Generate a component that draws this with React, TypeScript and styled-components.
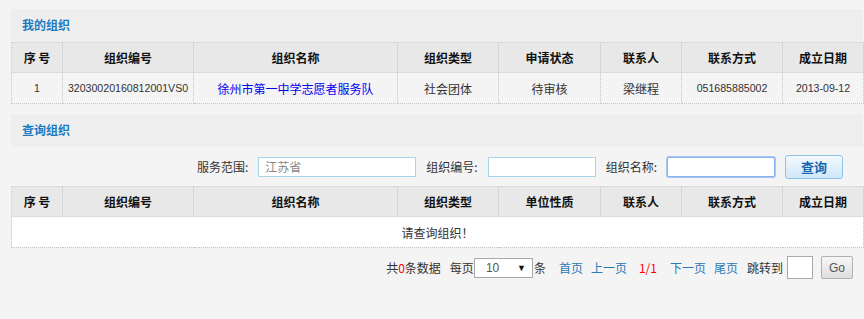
import * as React from "react";
import styled, { createGlobalStyle } from "styled-components";

const GlobalStyle = createGlobalStyle`
  html, body {
    margin: 0;
    padding: 0;
    background: #f4f4f4;
  }
  body {
    font-family: "Noto Sans CJK SC", "Liberation Sans", sans-serif;
    font-size: 12px;
    color: #333;
  }
`;

const Page = styled.div`
  padding: 9px 1px 0 11px;
  width: 864px;
  box-sizing: border-box;
`;

const Section = styled.section`
  margin-bottom: 10px;
`;

const SectionTitle = styled.h2`
  margin: 0;
  height: 33px;
  line-height: 32px;
  padding-left: 11px;
  background: #eeeeee;
  color: #1a7bc3;
  font-size: 12px;
  font-weight: bold;
`;

const Table = styled.table`
  width: 100%;
  border-collapse: collapse;
  table-layout: fixed;
`;

const Th = styled.th`
  height: 29px;
  padding: 0;
  background: #e8e8e8;
  border-top: 1px solid #dcdcdc;
  border-bottom: 1px solid #dcdcdc;
  border-left: 1px dotted #c4c4c4;
  border-right: 1px dotted #c4c4c4;
  font-weight: bold;
  font-size: 12px;
  color: #111;
  text-align: center;
`;

const Td = styled.td<{ $white?: boolean; $mono?: boolean }>`
  height: 30px;
  padding: 0;
  background: ${(p) => (p.$white ? "#ffffff" : "#f4f4f4")};
  border: 1px dotted #c4c4c4;
  text-align: center;
  font-size: ${(p) => (p.$mono ? "10.6px" : "12px")};
  font-family: ${(p) =>
    p.$mono ? '"Liberation Sans", sans-serif' : '"Noto Sans CJK SC", sans-serif'};
  color: #333;
  white-space: nowrap;
  overflow: hidden;
`;

const NameLink = styled.a`
  color: #0000ee;
  text-decoration: none;
`;

const SearchBar = styled.div`
  display: flex;
  align-items: center;
  justify-content: flex-end;
  height: 39px;
  padding-right: 20px;
`;

const Field = styled.label`
  display: flex;
  align-items: center;
  gap: 10px;
  margin-right: 10px;
  color: #333;
`;

const TextInput = styled.input<{ $w: number; $focus?: boolean }>`
  width: ${(p) => p.$w}px;
  height: 20px;
  box-sizing: border-box;
  padding: 0 6px;
  font-family: "Noto Sans CJK SC", sans-serif;
  font-size: 12px;
  color: #888;
  background: #fff;
  border: 1px solid ${(p) => (p.$focus ? "#8ab4ee" : "#a9d4ea")};
  border-radius: ${(p) => (p.$focus ? "2px" : "0")};
  box-shadow: ${(p) => (p.$focus ? "0 0 0 1px #a7c6f2" : "none")};
  outline: none;
`;

const SearchButton = styled.button`
  width: 58px;
  height: 24px;
  border: 1px solid #8cc3e8;
  border-radius: 3px;
  background: linear-gradient(#f4fafe, #cfe7f8);
  color: #1666b0;
  font-family: "Noto Sans CJK SC", sans-serif;
  font-weight: bold;
  font-size: 13px;
  padding: 0;
  cursor: pointer;
`;

const Pager = styled.div`
  display: flex;
  align-items: center;
  justify-content: flex-end;
  padding: 8px 10px 0 0;
  color: #333;
  font-size: 12px;
`;

const Text = styled.span<{ $gap?: number }>`
  margin-right: ${(p) => p.$gap ?? 0}px;
  white-space: nowrap;
`;

const Red = styled.span`
  color: #ff0000;
`;

const PageLink = styled.a<{ $gap: number; $current?: boolean }>`
  margin-right: ${(p) => p.$gap}px;
  color: ${(p) => (p.$current ? "#ff0000" : "#2a78b5")};
  text-decoration: none;
  white-space: nowrap;
`;

const SizeSelect = styled.div`
  display: flex;
  align-items: center;
  justify-content: space-between;
  width: 59px;
  height: 20px;
  box-sizing: border-box;
  padding: 0 6px 0 11px;
  margin-right: 1px;
  border: 1px solid #a9a9a9;
  background: #fff;
  color: #555;
  font-family: "Liberation Sans", sans-serif;
  font-size: 12px;
`;

const Arrow = styled.span`
  font-size: 9px;
  color: #111;
`;

const JumpInput = styled.input`
  width: 26px;
  height: 23px;
  box-sizing: border-box;
  margin: 0 8px 0 4px;
  border: 1px solid #aaa;
  background: #fff;
  outline: none;
`;

const GoButton = styled.button`
  width: 32px;
  height: 23px;
  padding: 0;
  border: 1px solid #b0b0b0;
  border-radius: 2px;
  background: linear-gradient(#f6f6f6, #dedede);
  color: #555;
  font-family: "Liberation Sans", sans-serif;
  font-size: 12px;
`;

const colWidths = [51, 131, 204, 101, 102, 81, 101, 81];

function Cols() {
  return (
    <colgroup>
      {colWidths.map((w, i) => (
        <col key={i} style={{ width: w }} />
      ))}
    </colgroup>
  );
}

export default function App() {
  const myHeads = ["序 号", "组织编号", "组织名称", "组织类型", "申请状态", "联系人", "联系方式", "成立日期"];
  const queryHeads = ["序 号", "组织编号", "组织名称", "组织类型", "单位性质", "联系人", "联系方式", "成立日期"];
  return (
    <Page>
      <GlobalStyle />
      <Section>
        <SectionTitle>我的组织</SectionTitle>
        <Table>
          <Cols />
          <thead>
            <tr>
              {myHeads.map((h) => (
                <Th key={h}>{h}</Th>
              ))}
            </tr>
          </thead>
          <tbody>
            <tr>
              <Td $mono>1</Td>
              <Td $mono>32030020160812001VS0</Td>
              <Td>
                <NameLink href="#">徐州市第一中学志愿者服务队</NameLink>
              </Td>
              <Td>社会团体</Td>
              <Td>待审核</Td>
              <Td>梁继程</Td>
              <Td $mono>051685885002</Td>
              <Td $mono>2013-09-12</Td>
            </tr>
          </tbody>
        </Table>
      </Section>
      <Section>
        <SectionTitle>查询组织</SectionTitle>
        <SearchBar>
          <Field>
            服务范围:
            <TextInput $w={158} defaultValue="江苏省" />
          </Field>
          <Field>
            组织编号:
            <TextInput $w={108} />
          </Field>
          <Field>
            组织名称:
            <TextInput $w={108} $focus />
          </Field>
          <SearchButton>查询</SearchButton>
        </SearchBar>
        <Table>
          <Cols />
          <thead>
            <tr>
              {queryHeads.map((h) => (
                <Th key={h}>{h}</Th>
              ))}
            </tr>
          </thead>
          <tbody>
            <tr>
              <Td $white colSpan={8}>
                请查询组织！
              </Td>
            </tr>
          </tbody>
        </Table>
        <Pager>
          <Text $gap={9}>
            共<Red>0</Red>条数据
          </Text>
          <Text>每页</Text>
          <SizeSelect>
            10 <Arrow>▼</Arrow>
          </SizeSelect>
          <Text $gap={13}>条</Text>
          <PageLink href="#" $gap={8}>首页</PageLink>
          <PageLink href="#" $gap={12}>上一页</PageLink>
          <PageLink href="#" $gap={13} $current>1/1</PageLink>
          <PageLink href="#" $gap={8}>下一页</PageLink>
          <PageLink href="#" $gap={9}>尾页</PageLink>
          <Text>跳转到</Text>
          <JumpInput />
          <GoButton>Go</GoButton>
        </Pager>
      </Section>
    </Page>
  );
}
